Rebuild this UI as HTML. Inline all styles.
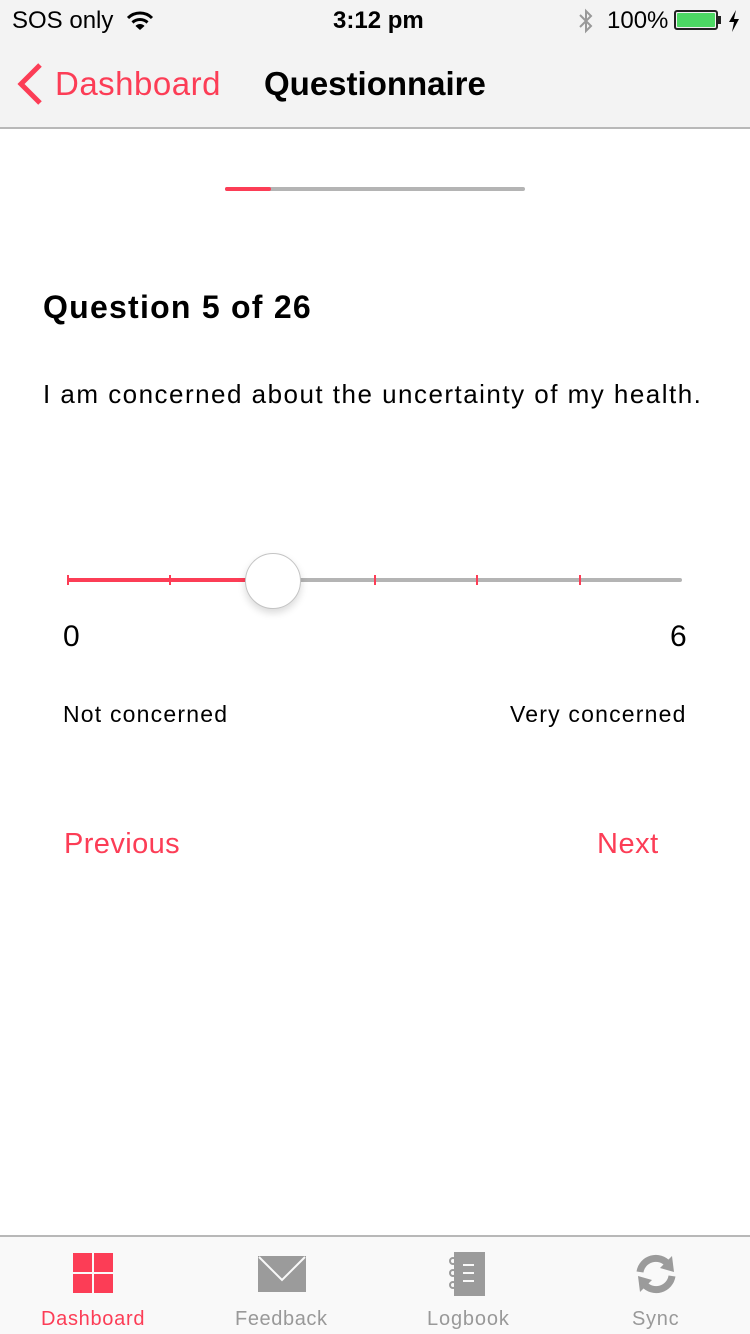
<!DOCTYPE html>
<html><head><meta charset="utf-8"><style>
*{margin:0;padding:0;box-sizing:border-box}
body{width:750px;height:1334px;background:#fff;font-family:"Liberation Sans",Helvetica,sans-serif;position:relative;overflow:hidden}
.abs{position:absolute}
.top{left:0;top:0;width:750px;height:129px;background:#f3f3f3;border-bottom:2px solid #b8b8b8}
.red{color:#fc3d56}
</style></head><body>
<div class="abs top"></div>
<div class="abs" style="left:12px;top:7px;font-size:24px;color:#000">SOS only</div>
<svg class="abs" style="left:126px;top:10px" width="28" height="22" viewBox="0 0 28 22"><path d="M2 8 A17 17 0 0 1 26 8" stroke="#000" stroke-width="3" fill="none"/><path d="M6.5 12.5 A11 11 0 0 1 21.5 12.5" stroke="#000" stroke-width="3" fill="none"/><path d="M14 20 L9.5 16 A6 6 0 0 1 18.5 16 Z" fill="#000"/></svg>
<div class="abs" style="left:333px;top:7px;font-size:24px;font-weight:bold">3:12 pm</div>
<svg class="abs" style="left:577px;top:8px" width="18" height="26" viewBox="0 0 18 26"><path d="M3 7 L14 18 L9 23 L9 3 L14 8 L3 19" stroke="#999" stroke-width="2" fill="none"/></svg>
<div class="abs" style="left:607px;top:7px;font-size:24px">100%</div>
<div class="abs" style="left:674px;top:10px;width:44px;height:20px;border:2px solid #222;border-radius:3px;padding:1px"><div style="width:100%;height:100%;background:#4cd964;border-radius:1px"></div></div>
<div class="abs" style="left:718px;top:16px;width:3px;height:8px;background:#222"></div>
<svg class="abs" style="left:728px;top:10px" width="12" height="22" viewBox="0 0 12 22"><path d="M8 0 L1 12 L6 12 L4 22 L11 9 L6 9 Z" fill="#000"/></svg>
<svg class="abs" style="left:14px;top:62px" width="30" height="44" viewBox="0 0 30 44"><path d="M26 3 L7 22 L26 41" stroke="#fc3d56" stroke-width="5" fill="none"/></svg>
<div class="abs red" style="left:55px;top:65px;font-size:33px;letter-spacing:0.5px">Dashboard</div>
<div class="abs" style="left:264px;top:65px;font-size:33px;font-weight:bold">Questionnaire</div>

<div class="abs" style="left:225px;top:187px;width:300px;height:4px;background:#b4b4b4;border-radius:2px"></div>
<div class="abs" style="left:225px;top:187px;width:46px;height:4px;background:#fc3d56;border-radius:2px"></div>

<div class="abs" style="left:43px;top:289px;font-size:32px;font-weight:bold;letter-spacing:1.25px">Question 5 of 26</div>
<div class="abs" style="left:43px;top:379px;font-size:26px;letter-spacing:1.48px">I am concerned about the uncertainty of my health.</div>

<div class="abs" style="left:67px;top:578px;width:615px;height:4px;background:#b4b4b4;border-radius:2px"></div>
<div class="abs" style="left:67px;top:578px;width:206px;height:4px;background:#fc3d56"></div>
<div class="abs" style="left:67px;top:575px;width:2px;height:10px;background:#fc3d56"></div>
<div class="abs" style="left:169px;top:575px;width:2px;height:10px;background:#fc3d56"></div>
<div class="abs" style="left:374px;top:575px;width:2px;height:10px;background:#fc3d56"></div>
<div class="abs" style="left:476px;top:575px;width:2px;height:10px;background:#fc3d56"></div>
<div class="abs" style="left:579px;top:575px;width:2px;height:10px;background:#fc3d56"></div>
<div class="abs" style="left:245px;top:553px;width:56px;height:56px;border-radius:50%;background:#fff;border:1px solid #c4c4c4;box-shadow:0 4px 8px rgba(0,0,0,.15)"></div>

<div class="abs" style="left:63px;top:620px;font-size:30px">0</div>
<div class="abs" style="left:670px;top:620px;font-size:30px">6</div>
<div class="abs" style="left:63px;top:701px;font-size:23px;letter-spacing:1.2px">Not concerned</div>
<div class="abs" style="left:510px;top:701px;font-size:23px;letter-spacing:1.2px">Very concerned</div>
<div class="abs red" style="left:64px;top:828px;font-size:29px;letter-spacing:0.4px">Previous</div>
<div class="abs red" style="left:597px;top:828px;font-size:29px;letter-spacing:0.5px">Next</div>

<div class="abs" style="left:0;top:1235px;width:750px;height:99px;background:#f9f9f9;border-top:2px solid #b8b8b8"></div>
<svg class="abs" style="left:73px;top:1253px" width="40" height="40" viewBox="0 0 40 40"><rect x="0" y="0" width="19" height="19" fill="#fc3d56"/><rect x="21" y="0" width="19" height="19" fill="#fc3d56"/><rect x="0" y="21" width="19" height="19" fill="#fc3d56"/><rect x="21" y="21" width="19" height="19" fill="#fc3d56"/></svg>
<svg class="abs" style="left:258px;top:1256px" width="48" height="36" viewBox="0 0 48 36"><rect width="48" height="36" fill="#9b9b9b"/><path d="M1 1 L24 24 L47 1" stroke="#f9f9f9" stroke-width="2" fill="none"/></svg>
<svg class="abs" style="left:449px;top:1252px" width="36" height="44" viewBox="0 0 36 44"><rect x="5" y="0" width="31" height="44" fill="#9b9b9b"/><circle cx="4" cy="9" r="3" fill="none" stroke="#9b9b9b" stroke-width="2"/><circle cx="4" cy="21" r="3" fill="none" stroke="#9b9b9b" stroke-width="2"/><circle cx="4" cy="33" r="3" fill="none" stroke="#9b9b9b" stroke-width="2"/><path d="M14 13 H25 M14 21 H25 M14 29 H25" stroke="#f9f9f9" stroke-width="2"/></svg>
<svg class="abs" style="left:634px;top:1254px" width="44" height="40" viewBox="0 0 44 40"><path d="M6 18 A16 16 0 0 1 34 10" stroke="#9b9b9b" stroke-width="7" fill="none"/><path d="M38 2 L40 18 L26 14 Z" fill="#9b9b9b"/><path d="M38 22 A16 16 0 0 1 10 30" stroke="#9b9b9b" stroke-width="7" fill="none"/><path d="M6 38 L4 22 L18 26 Z" fill="#9b9b9b"/></svg>
<div class="abs red" style="left:41px;top:1308px;font-size:20px;letter-spacing:0.7px">Dashboard</div>
<div class="abs" style="left:235px;top:1308px;font-size:20px;color:#999;letter-spacing:0.6px">Feedback</div>
<div class="abs" style="left:427px;top:1308px;font-size:20px;color:#999;letter-spacing:0.85px">Logbook</div>
<div class="abs" style="left:632px;top:1308px;font-size:20px;color:#999;letter-spacing:0.7px">Sync</div>
</body></html>
